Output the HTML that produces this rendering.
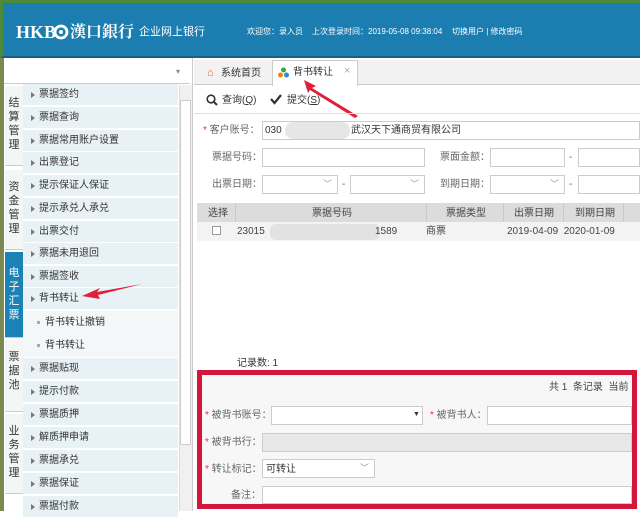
<!DOCTYPE html>
<html><head><meta charset="utf-8"><style>
*{margin:0;padding:0;box-sizing:border-box}
body{width:640px;height:511px;overflow:hidden;background:#fff;font-family:"Liberation Sans","Noto Sans CJK SC",sans-serif;font-size:10px;color:#444;position:relative}
.a{position:absolute;white-space:nowrap;line-height:12px}
.hdr{left:0;top:0;width:640px;height:58px;background:#1b7db0;border-top:3px solid #4d8a3a;border-left:3px solid #4d8a3a;border-bottom:2px solid #1a5f8a}
.w{color:#fff}
.mi{left:23px;width:155px;height:22px;background:#e8f1f5;border-bottom:1px solid #fff;padding-left:16px;line-height:22px;font-size:10px;color:#333}
.mi:before{content:"";position:absolute;left:8px;top:8px;border-left:4px solid #777;border-top:3px solid transparent;border-bottom:3px solid transparent}
.sub{left:23px;width:155px;height:23px;background:#f4f7f8;padding-left:22px;line-height:23px;color:#333}
.sub:before{content:"";position:absolute;left:14px;top:10px;width:3px;height:3px;background:#aaa}
.cat{left:5px;width:18px;background:#f4f6f6;color:#333;font-size:11px;line-height:14px;text-align:center;padding-top:10px;border-bottom:1px solid #ccc}
.in{border:1px solid #ccc;background:#fff;height:19px}
.lbl{font-size:10px;color:#666}
.st{color:#d33}
.dd:after{content:"﹀";position:absolute;right:5px;top:2px;color:#999;font-size:9px}
</style></head><body>
<div class="a hdr"></div>
<div class="a w" style="left:16px;top:22px;font-family:'Liberation Serif',serif;font-weight:bold;font-size:18px;line-height:20px">HKB</div>
<svg class="a" style="left:53px;top:24px" width="16" height="16" viewBox="0 0 20 20"><circle cx="10" cy="10" r="7.5" fill="none" stroke="#fff" stroke-width="3.5"/><circle cx="10" cy="10" r="2.5" fill="#fff"/></svg>
<div class="a w" style="left:70px;top:21px;font-weight:bold;font-size:16px;line-height:20px;font-family:'Noto Serif CJK SC',serif">漢口銀行</div>
<div class="a w" style="left:139px;top:24px;font-size:11px;line-height:16px">企业网上银行</div>
<div class="a w" style="left:247px;top:27px;font-size:8px;line-height:10px">欢迎您：录入员</div>
<div class="a w" style="left:312px;top:27px;font-size:8px;line-height:10px">上次登录时间：2019-05-08 09:38:04</div>
<div class="a w" style="left:452px;top:27px;font-size:8px;line-height:10px">切换用户 | 修改密码</div>
<!-- sidebar -->
<div class="a" style="left:0;top:58px;width:193px;height:453px;background:#fff;border-right:1px solid #ccc"></div>
<div class="a" style="left:0;top:58px;width:4px;height:453px;background:#7a8a50"></div>
<div class="a" style="left:4px;top:60px;width:186px;height:24px;border-bottom:1px solid #ccc"></div>
<div class="a" style="left:176px;top:66px;color:#888;font-size:8px">▾</div>
<div class="a" style="left:179px;top:85px;width:13px;height:426px;background:#f0f0f0;border-left:1px solid #ddd"></div>
<div class="a" style="left:180px;top:100px;width:11px;height:345px;background:#fff;border:1px solid #ccc"></div>
<div class="a cat" style="top:86px;height:80px">结<br>算<br>管<br>理</div>
<div class="a cat" style="top:170px;height:80px">资<br>金<br>管<br>理</div>
<div class="a cat" style="top:252px;height:86px;background:#1a82b4;color:#fff;padding-top:14px">电<br>子<br>汇<br>票</div>
<div class="a cat" style="top:340px;height:72px">票<br>据<br>池</div>
<div class="a cat" style="top:414px;height:80px">业<br>务<br>管<br>理</div>
<div class="a mi" style="top:84px">票据签约</div>
<div class="a mi" style="top:107px">票据查询</div>
<div class="a mi" style="top:130px">票据常用账户设置</div>
<div class="a mi" style="top:152px">出票登记</div>
<div class="a mi" style="top:175px">提示保证人保证</div>
<div class="a mi" style="top:198px">提示承兑人承兑</div>
<div class="a mi" style="top:221px">出票交付</div>
<div class="a mi" style="top:243px">票据未用退回</div>
<div class="a mi" style="top:266px">票据签收</div>
<div class="a mi" style="top:288px">背书转让</div>
<div class="a sub" style="top:311px">背书转让撤销</div>
<div class="a sub" style="top:334px">背书转让</div>
<div class="a mi" style="top:358px">票据贴现</div>
<div class="a mi" style="top:381px">提示付款</div>
<div class="a mi" style="top:404px">票据质押</div>
<div class="a mi" style="top:427px">解质押申请</div>
<div class="a mi" style="top:450px">票据承兑</div>
<div class="a mi" style="top:473px">票据保证</div>
<div class="a mi" style="top:496px">票据付款</div>
<svg class="a" style="left:80px;top:282px" width="65" height="20"><path d="M2 14 L20 6 L17 10 L62 2 L18 13 L20 17 Z" fill="#e0203a"/></svg>
<!-- tabs -->
<div class="a" style="left:194px;top:60px;width:446px;height:25px;background:#f2f2f2;border-bottom:1px solid #ccc"></div>
<div class="a" style="left:272px;top:60px;width:86px;height:26px;background:#fff;border:1px solid #ccc;border-bottom:none"></div>
<div class="a" style="left:207px;top:67px;color:#d86a20;font-size:11px">⌂</div>
<div class="a" style="left:221px;top:68px;font-size:10px;color:#333">系统首页</div>
<svg class="a" style="left:278px;top:67px" width="11" height="11"><circle cx="5.5" cy="3" r="2.5" fill="#3a3"/><circle cx="2.5" cy="8" r="2.5" fill="#e80"/><circle cx="8.5" cy="8" r="2.5" fill="#38c"/></svg>
<div class="a" style="left:293px;top:67px;font-size:10px;color:#333">背书转让</div>
<div class="a" style="left:344px;top:65px;color:#aaa;font-size:11px">×</div>
<svg class="a" style="left:302px;top:78px" width="60" height="42"><path d="M2 2 L14 8 L10 10 L56 38 L53 40 L8 12 L6 15 Z" fill="#e0203a"/></svg>
<!-- toolbar -->
<svg class="a" style="left:206px;top:94px" width="12" height="12"><circle cx="5" cy="5" r="3.8" fill="none" stroke="#333" stroke-width="1.6"/><path d="M8 8 L11 11" stroke="#333" stroke-width="2"/></svg>
<div class="a" style="left:222px;top:95px;font-size:10px;color:#333">查询(<u>Q</u>)</div>
<svg class="a" style="left:270px;top:94px" width="12" height="11"><path d="M1 5 L4.5 9 L11 1" fill="none" stroke="#333" stroke-width="2.2"/></svg>
<div class="a" style="left:287px;top:95px;font-size:10px;color:#333">提交(<u>S</u>)</div>
<div class="a" style="left:194px;top:113px;width:446px;height:1px;background:#ddd"></div>
<!-- form -->
<div class="a lbl" style="left:203px;top:125px"><span class="st">*</span> 客户账号：</div>
<div class="a in" style="left:262px;top:121px;width:378px"></div>
<div class="a" style="left:265px;top:125px;color:#333">030</div>
<div class="a" style="left:285px;top:122px;width:65px;height:17px;background:#e6e6e6;border-radius:8px"></div>
<div class="a" style="left:351px;top:125px;color:#333">武汉天下通商贸有限公司</div>
<div class="a lbl" style="left:212px;top:152px">票据号码：</div>
<div class="a in" style="left:262px;top:148px;width:163px"></div>
<div class="a lbl" style="left:440px;top:152px">票面金额：</div>
<div class="a in" style="left:490px;top:148px;width:75px"></div>
<div class="a lbl" style="left:569px;top:152px">-</div>
<div class="a in" style="left:578px;top:148px;width:62px"></div>
<div class="a lbl" style="left:212px;top:179px">出票日期：</div>
<div class="a in dd" style="left:262px;top:175px;width:76px"></div>
<div class="a lbl" style="left:342px;top:179px">-</div>
<div class="a in dd" style="left:350px;top:175px;width:75px"></div>
<div class="a lbl" style="left:440px;top:179px">到期日期：</div>
<div class="a in dd" style="left:490px;top:175px;width:75px"></div>
<div class="a lbl" style="left:569px;top:179px">-</div>
<div class="a in" style="left:578px;top:175px;width:62px"></div>
<!-- table -->
<div class="a" style="left:197px;top:203px;width:443px;height:19px;background:#dcdcdc"></div>
<div class="a" style="left:235px;top:203px;width:1px;height:19px;background:#c8c8c8"></div>
<div class="a" style="left:426px;top:203px;width:1px;height:19px;background:#c8c8c8"></div>
<div class="a" style="left:503px;top:203px;width:1px;height:19px;background:#c8c8c8"></div>
<div class="a" style="left:563px;top:203px;width:1px;height:19px;background:#c8c8c8"></div>
<div class="a" style="left:623px;top:203px;width:1px;height:19px;background:#c8c8c8"></div>
<div class="a" style="left:208px;top:208px;color:#444">选择</div>
<div class="a" style="left:312px;top:208px;color:#444">票据号码</div>
<div class="a" style="left:446px;top:208px;color:#444">票据类型</div>
<div class="a" style="left:514px;top:208px;color:#444">出票日期</div>
<div class="a" style="left:575px;top:208px;color:#444">到期日期</div>
<div class="a" style="left:197px;top:222px;width:443px;height:19px;background:#f3f3f3"></div>
<div class="a" style="left:212px;top:226px;width:9px;height:9px;border:1px solid #999;background:#fff"></div>
<div class="a" style="left:237px;top:226px;color:#444">23015</div>
<div class="a" style="left:270px;top:224px;width:110px;height:16px;background:#e2e2e2;border-radius:6px"></div>
<div class="a" style="left:375px;top:226px;color:#444">1589</div>
<div class="a" style="left:426px;top:226px;color:#444">商票</div>
<div class="a" style="left:507px;top:226px;color:#444">2019-04-09&nbsp;&nbsp;2020-01-09</div>
<div class="a" style="left:237px;top:358px;color:#333">记录数: 1</div>
<!-- red box -->
<div class="a" style="left:197px;top:370px;width:440px;height:139px;border:5px solid #d4163a;background:#f7f7f7"></div>
<div class="a" style="left:549px;top:382px;color:#444">共 1&nbsp;&nbsp;条记录&nbsp;&nbsp;当前</div>
<div class="a lbl" style="left:205px;top:410px"><span class="st">*</span> 被背书账号：</div>
<div class="a in" style="left:271px;top:406px;width:152px"></div>
<div class="a" style="left:413px;top:409px;font-size:7px;color:#333">▼</div>
<div class="a lbl" style="left:430px;top:410px"><span class="st">*</span> 被背书人：</div>
<div class="a in" style="left:487px;top:406px;width:145px"></div>
<div class="a lbl" style="left:205px;top:437px"><span class="st">*</span> 被背书行：</div>
<div class="a in" style="left:262px;top:433px;width:370px;background:#e8e8e8"></div>
<div class="a lbl" style="left:205px;top:464px"><span class="st">*</span> 转让标记：</div>
<div class="a in dd" style="left:262px;top:459px;width:113px"></div>
<div class="a" style="left:266px;top:464px;color:#333">可转让</div>
<div class="a lbl" style="left:231px;top:490px">备注：</div>
<div class="a in" style="left:262px;top:486px;width:370px;height:18px"></div>
</body></html>
